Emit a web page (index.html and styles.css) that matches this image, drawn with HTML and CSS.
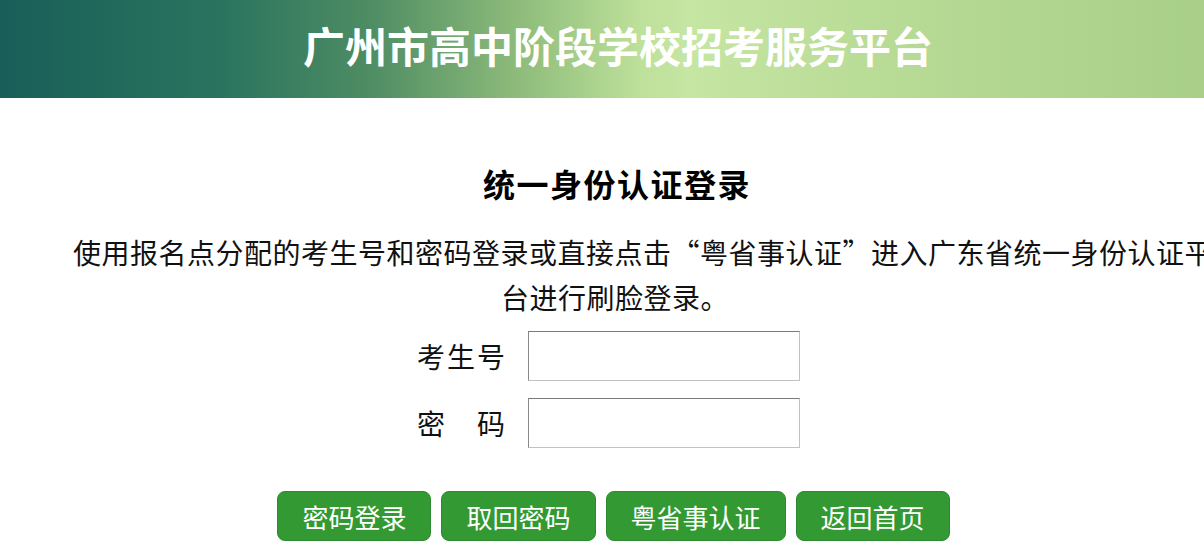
FILE: index.html
```html
<!DOCTYPE html>
<html>
<head>
    <meta charset="utf-8">
    <title>统一身份认证登录 - 广州市高中阶段学校招考服务平台</title>
    <link rel="stylesheet" href="styles.css">
</head>
<body>
    <div class="page">
        <div class="header">
            <h1>广州市高中阶段学校招考服务平台</h1>
        </div>

        <div class="login">
            <h2>统一身份认证登录</h2>
            <p class="tip">使用报名点分配的考生号和密码登录或直接点击“粤省事认证”进入广东省统一身份认证平台进行刷脸登录。</p>

            <div class="form">
                <div class="row">
                    <label for="ksh">考生号</label>
                    <input type="text" id="ksh">
                </div>
                <div class="row">
                    <label for="mm">密码</label>
                    <input type="password" id="mm">
                </div>
            </div>

            <div class="btns">
                <button class="btn">密码登录</button>
                <button class="btn">取回密码</button>
                <button class="btn">粤省事认证</button>
                <button class="btn">返回首页</button>
            </div>
        </div>
    </div>
</body>
</html>
```

FILE: styles.css
```css
html, body {
    overflow-x: hidden;
}
body {
    margin: 0;
    font-family: "Noto Sans CJK SC", sans-serif;
    color: #000;
}
.page {
    width: 1230px;
}
.header {
    height: 98px;
    background: linear-gradient(to right, #195e58 0%, #2a745f 18%, #4e8c63 30%, #8dbb7a 42%, #bde09a 52%, #c6e6a3 56%, #b9dc97 70%, #a7ce87 100%);
}
.header h1 {
    margin: 0;
    padding: 0 0 8px 6px;
    line-height: 90px;
    font-size: 42px;
    font-weight: 700;
    letter-spacing: 0;
    color: #fff;
    text-align: center;
}
.login {
    text-align: center;
}
.login h2 {
    margin: 64px 0 0;
    font-size: 32px;
    line-height: 42px;
    font-weight: 700;
    letter-spacing: 1.5px;
    padding-left: 4px;
}
.tip {
    margin: 26px 14px 0;
    font-size: 28px;
    line-height: 45px;
    letter-spacing: 0.5px;
    text-indent: 2em;
    color: #111;
}
.form {
    margin-top: 11px;
    padding-right: 13px;
    display: flex;
    flex-direction: column;
    align-items: center;
    gap: 17px;
}
.row {
    display: flex;
    align-items: center;
    gap: 23px;
}
.row label {
    width: 88px;
    font-size: 28px;
    color: #111;
    text-align: justify;
    text-align-last: justify;
}
.row input {
    width: 272px;
    height: 50px;
    box-sizing: border-box;
    border: 1px solid #c2c2c2;
    border-top-color: #7a7a7a;
    border-left-color: #8a8a8a;
    font-size: 20px;
    padding: 0 6px;
}
.btns {
    margin-top: 43px;
    display: flex;
    justify-content: center;
    gap: 10px;
    padding-right: 3px;
}
.btn {
    height: 50px;
    padding: 0 24px;
    border: 1px solid #2e8a30;
    border-radius: 8px;
    background: #339933;
    color: #fff;
    font-family: "Noto Sans CJK SC", sans-serif;
    font-size: 26px;
    cursor: pointer;
}
```
